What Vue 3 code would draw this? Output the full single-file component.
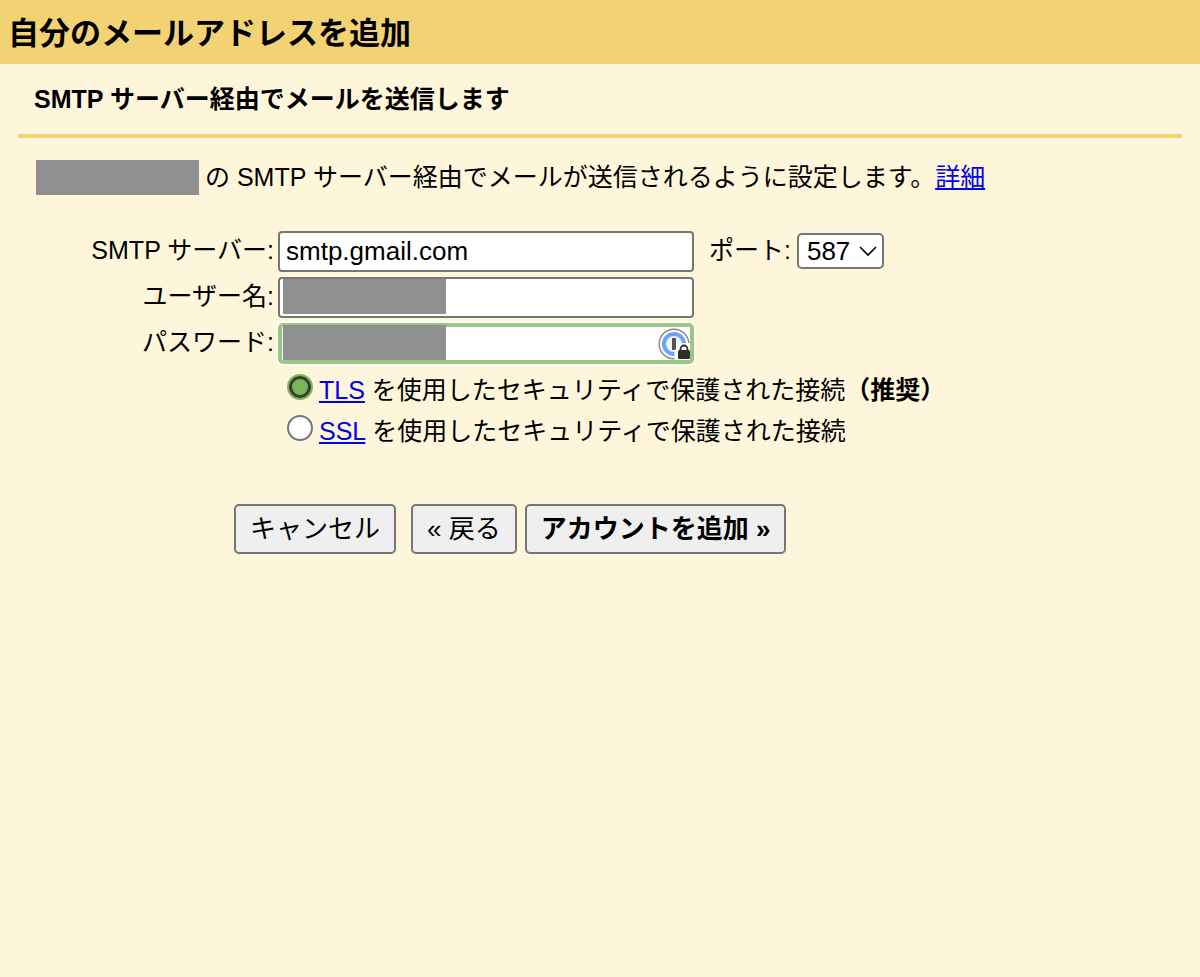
<script setup>
import { ref } from 'vue'

const server = ref('smtp.gmail.com')
const username = ref('')
const password = ref('')
const port = ref('587')
const security = ref('tls')
</script>

<template>
  <div class="page">
    <header class="bar">
      <h1>自分のメールアドレスを追加</h1>
    </header>
    <main>
      <h2>SMTP サーバー経由でメールを送信します</h2>
      <p class="intro">
        <span class="mask"></span>
        <span>の SMTP サーバー経由でメールが送信されるように設定します。<a href="#">詳細</a></span>
      </p>
      <form @submit.prevent>
        <div class="row">
          <label class="name" for="server">SMTP サーバー:</label>
          <div class="field"><input id="server" v-model="server" class="box" type="text"></div>
          <label class="port-label" for="port">ポート:</label>
          <div class="select">
            <select id="port" v-model="port">
              <option>587</option>
              <option>465</option>
              <option>25</option>
            </select>
            <svg class="chevron" viewBox="0 0 18 12" aria-hidden="true">
              <path d="M1 2 L9 10 L17 2" fill="none" stroke="#000" stroke-width="1.7" />
            </svg>
          </div>
        </div>
        <div class="row">
          <label class="name" for="user">ユーザー名:</label>
          <div class="field">
            <input id="user" v-model="username" class="box" type="text">
            <span class="mask over"></span>
          </div>
        </div>
        <div class="row">
          <label class="name" for="pass">パスワード:</label>
          <div class="field">
            <input id="pass" v-model="password" class="box active" type="password">
            <span class="mask over"></span>
            <svg class="manager" viewBox="0 0 32 32" aria-hidden="true">
              <circle cx="16" cy="16" r="14.8" fill="#fff" stroke="#858585" stroke-width="1.4" />
              <circle cx="16" cy="16" r="10" fill="#f3f3f3" stroke="#69a3fb" stroke-width="4" />
              <rect x="14" y="10" width="4" height="12" fill="#555" />
              <path d="M16.500 32 V24 Q16.500 21 19.500 20 Q20.500 15 26 15 H32 V32 Z" fill="#fff" />
              <rect x="20" y="22" width="12" height="9" rx="1.500" fill="#2e2e2e" />
              <path d="M22.500 23 V21 a3.500 3.500 0 0 1 7 0 V23" fill="none" stroke="#2e2e2e" stroke-width="1.8" />
            </svg>
          </div>
        </div>
        <div class="choices">
          <div class="choice">
            <input id="tls" v-model="security" type="radio" name="security" value="tls">
            <label for="tls"><a href="#">TLS</a> を使用したセキュリティで保護された接続<b>（推奨）</b></label>
          </div>
          <div class="choice">
            <input id="ssl" v-model="security" type="radio" name="security" value="ssl">
            <label for="ssl"><a href="#">SSL</a> を使用したセキュリティで保護された接続</label>
          </div>
        </div>
        <div class="actions">
          <button type="button" class="cancel">キャンセル</button>
          <button type="button">« 戻る</button>
          <button type="submit" class="primary">アカウントを追加 »</button>
        </div>
      </form>
    </main>
  </div>
</template>

<style>
body {
  margin: 0;
  background: #fef6da;
}
</style>

<style scoped>
.page,
.page input,
.page select,
.page button {
  font-family: "Liberation Sans", "Noto Sans CJK JP", sans-serif;
  color: #000;
}
.page {
  font-size: 25px;
  line-height: 40px;
}
.bar {
  padding: 14px 8px 10px;
  background: #f3d274;
}
h1 {
  margin: 0;
  font-size: 31px;
  line-height: 40px;
}
main {
  padding: 0 18px;
}
h2 {
  margin: 0;
  padding: 15px 16px;
  font-size: 25px;
  line-height: 40px;
  border-bottom: 4px solid #f3d274;
}
a {
  color: #0000ee;
  text-decoration-thickness: 2px;
  text-underline-offset: 2px;
}
.intro {
  display: flex;
  align-items: center;
  gap: 6px;
  margin: 0;
  padding: 19px 18px 0;
}
.mask {
  flex: none;
  width: 163px;
  height: 35px;
  background: #909090;
}
form {
  padding: 34px 0 0;
  line-height: 38px;
}
.row {
  display: flex;
  align-items: flex-start;
  height: 42px;
  margin-bottom: 4px;
}
.name {
  width: 256px;
  margin-right: 4px;
  text-align: right;
}
.field {
  position: relative;
  width: 416px;
}
.box {
  display: block;
  box-sizing: border-box;
  width: 100%;
  height: 41px;
  padding: 0 6px;
  border: 2px solid #767676;
  border-radius: 4px;
  background: #fff;
  font-size: 26px;
  outline: none;
}
.active {
  border: 4px solid #9bc785;
  border-radius: 5px;
  box-shadow: 0 0 0 2px #fffdf5;
}
.over {
  position: absolute;
  left: 5px;
  top: 2px;
}
.manager {
  position: absolute;
  right: 4px;
  top: 5px;
  width: 32px;
  height: 32px;
}
.port-label {
  margin: 0 6px 0 15px;
}
.select {
  position: relative;
  padding-top: 2px;
}
select {
  display: block;
  appearance: none;
  box-sizing: border-box;
  width: 87px;
  height: 36px;
  padding: 0 8px;
  border: 2px solid #767676;
  border-radius: 5px;
  background: #fff;
  font-size: 26px;
}
.chevron {
  position: absolute;
  right: 7px;
  top: 14px;
  width: 18px;
  height: 12px;
  pointer-events: none;
}
.choices {
  padding: 2px 0 0 269px;
}
.choice {
  display: flex;
  align-items: flex-start;
  gap: 6px;
  height: 41px;
}
.choice input {
  appearance: none;
  flex: none;
  box-sizing: border-box;
  width: 26px;
  height: 26px;
  margin: 3px 0 0;
  border: 2px solid #767676;
  border-radius: 50%;
  background: #fff;
}
.choice input:checked {
  border-color: #79b658;
  background: #79b658;
  box-shadow: inset 0 0 0 3px #3b3b3b;
}
.actions {
  display: flex;
  gap: 8px;
  padding: 51px 0 0 216px;
}
button {
  height: 50px;
  padding: 0 14px;
  border: 2px solid #767676;
  border-radius: 5px;
  background: #efefef;
  font-size: 26px;
  line-height: 40px;
}
.cancel {
  margin-right: 7px;
}
.primary {
  font-weight: bold;
}
</style>
